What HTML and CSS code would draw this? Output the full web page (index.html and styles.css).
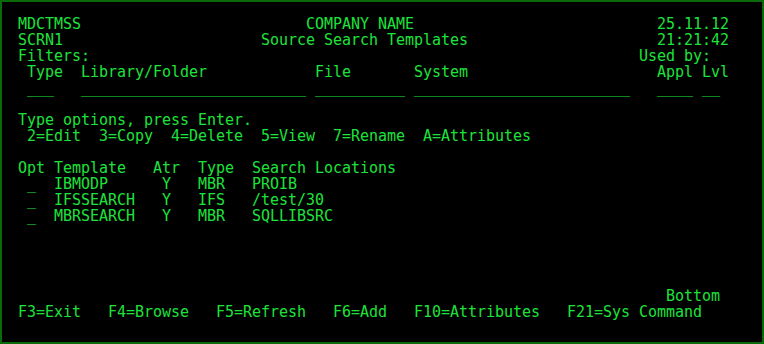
FILE: index.html
```html
<!DOCTYPE html>
<html>
<head>
<meta charset="utf-8">
<link rel="stylesheet" href="styles.css">
<title>SCRN1</title>
</head>
<body>
<div class="screen">
<div class="row">MDCTMSS                         COMPANY NAME                           25.11.12</div>
<div class="row">SCRN1                      Source Search Templates                     21:21:42</div>
<div class="row">Filters:                                                             Used by:</div>
<div class="row"> Type  Library/Folder            File       System                     Appl Lvl</div>
<div class="row"> ___   _________________________ __________ ________________________   ____ __</div>
<div class="row"> </div>
<div class="row">Type options, press Enter.</div>
<div class="row"> 2=Edit  3=Copy  4=Delete  5=View  7=Rename  A=Attributes</div>
<div class="row"> </div>
<div class="row">Opt Template   Atr  Type  Search Locations</div>
<div class="row"> _  IBMODP      Y   MBR   PROIB</div>
<div class="row"> _  IFSSEARCH   Y   IFS   /test/30</div>
<div class="row"> _  MBRSEARCH   Y   MBR   SQLLIBSRC</div>
<div class="row"> </div>
<div class="row"> </div>
<div class="row"> </div>
<div class="row"> </div>
<div class="row">                                                                        Bottom</div>
<div class="row">F3=Exit   F4=Browse   F5=Refresh   F6=Add   F10=Attributes   F21=Sys Command</div>
</div>
</body>
</html>
```
FILE: styles.css
```css
html, body {
  margin: 0;
  padding: 0;
  background: #000;
}
.screen {
  box-sizing: border-box;
  width: 764px;
  height: 344px;
  border: 2px solid #0a6a0a;
  background: #000;
  padding: 14px 0 0 16px;
  color: #1ee23c;
  font-family: "DejaVu Sans Mono", monospace;
  font-size: 15px;
  letter-spacing: -0.03px;
  line-height: 16px;
}
.row {
  white-space: pre;
  height: 16px;
}
```
